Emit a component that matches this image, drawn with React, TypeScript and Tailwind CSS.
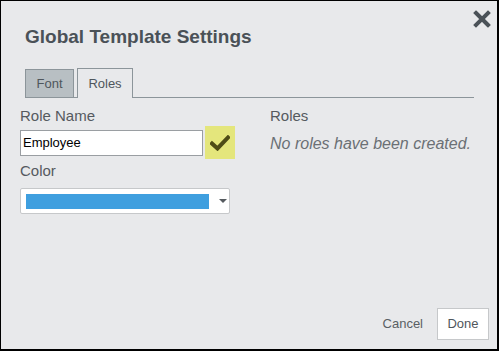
import React, { JSX } from 'react';

const CloseIcon = (): JSX.Element => (
  <svg width="18" height="18" viewBox="0 0 18 18" className="block">
    <path d="M3 3 L15 15 M15 3 L3 15" stroke="#4b5258" strokeWidth="4" strokeLinecap="square" />
  </svg>
);

const CheckIcon = (): JSX.Element => (
  <svg width="20" height="16" viewBox="0 0 20 16" className="block">
    <path d="M2 8.5 L7.5 13.5 L18 2.5" fill="none" stroke="#4e4c16" strokeWidth="4" strokeLinecap="square" />
  </svg>
);

const App = (): JSX.Element => {
  return (
    <div className="relative flex h-[351px] w-[499px] flex-col border-t border-l border-r-2 border-b-2 border-black bg-[#e8e9eb] font-['Liberation_Sans',Arial,sans-serif] text-[#555a5f]">
      {/* close */}
      <button className="absolute right-[6px] top-[9px]">
        <CloseIcon />
      </button>

      <h1 className="ml-[24px] mt-[24px] text-[19px] font-bold leading-[23px] text-[#4a5157]">
        Global Template Settings
      </h1>

      {/* tabs */}
      <div className="ml-[24px] mr-[23px] mt-[20px] flex items-end border-b border-[#8c959a]">
        <div className="mb-[-1px] flex h-[29px] w-[49px] items-center justify-center border border-[#8c959a] bg-[#b8bfc3] text-[13px] text-[#4f565c]">
          Font
        </div>
        <div className="mb-[-1px] ml-[3px] flex h-[30px] w-[56px] items-center justify-center border border-b-0 border-[#8c959a] bg-[#e8e9eb] text-[13px] text-[#4f565c]">
          Roles
        </div>
      </div>

      <div className="ml-[19px] mt-[8px] flex">
        {/* left column */}
        <div className="flex w-[250px] flex-col">
          <label className="text-[15px] leading-[20px]">Role Name</label>
          <div className="flex items-center">
            <input
              readOnly
              value="Employee"
              className="h-[26px] w-[183px] border border-[#9a9ea2] bg-white px-[2px] text-[13px] text-black outline-none"
            />
            <div className="ml-[2px] flex h-[33px] w-[30px] items-center justify-center bg-[#e4e67c]">
              <CheckIcon />
            </div>
          </div>
          <label className="mt-[2px] text-[15px] leading-[20px]">Color</label>
          <div className="mt-[7px] flex h-[26px] w-[210px] items-center rounded-[2px] border border-[#c6c8ca] bg-white pl-[5px]">
            <div className="h-[15px] w-[183px] bg-[#3f9fdf]" />
            <span className="ml-[10px] h-0 w-0 border-x-[4px] border-t-[4px] border-x-transparent border-t-[#555a5f]" />
          </div>
        </div>

        {/* right column */}
        <div className="flex flex-col">
          <div className="text-[15px] leading-[20px]">Roles</div>
          <div className="mt-[8px] text-[16px] italic leading-[20px] text-[#6b7075]">No roles have been created.</div>
        </div>
      </div>

      {/* footer */}
      <div className="mt-auto mb-[9px] mr-[8px] flex items-center justify-end">
        <span className="mr-[14px] text-[13px] text-[#5a5f64]">Cancel</span>
        <button className="flex h-[32px] w-[52px] items-center justify-center border border-[#c6c8ca] bg-white text-[13px] text-[#4f565c]">
          Done
        </button>
      </div>
    </div>
  );
};

export default App;
